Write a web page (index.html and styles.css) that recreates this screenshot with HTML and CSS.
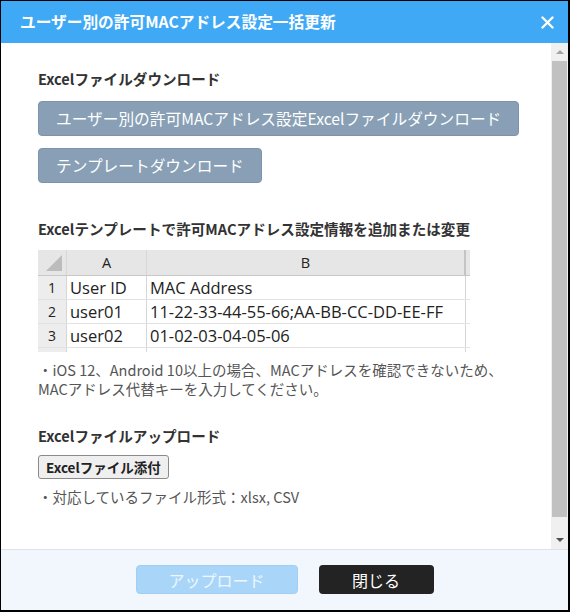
FILE: index.html
```html
<!DOCTYPE html>
<html lang="ja">
<head>
    <meta charset="UTF-8">
    <meta name="viewport" content="width=device-width, initial-scale=1.0">
    <title>ユーザー別の許可MACアドレス設定一括更新</title>
    <link rel="stylesheet" href="styles.css">
</head>
<body>
    <div class="dialog">
        <div class="dialog-header">
            <h1 class="dialog-title">ユーザー別の許可MACアドレス設定一括更新</h1>
            <button class="close-btn" aria-label="閉じる">
                <svg width="13" height="13" viewBox="0 0 13 13">
                    <path d="M1.5 1.5 L11.5 11.5 M11.5 1.5 L1.5 11.5" stroke="#fff" stroke-width="2.4" stroke-linecap="round"/>
                </svg>
            </button>
        </div>

        <div class="dialog-body">
            <div class="content">
                <h2 class="section-title">Excelファイルダウンロード</h2>
                <button class="btn btn-steel btn-wide">ユーザー別の許可MACアドレス設定Excelファイルダウンロード</button>
                <button class="btn btn-steel btn-template">テンプレートダウンロード</button>

                <h2 class="section-title section-gap">Excelテンプレートで許可MACアドレス設定情報を追加または変更</h2>
                <div class="sheet">
                    <div class="sheet-row sheet-head">
                        <div class="cell corner"><span class="corner-tri"></span></div>
                        <div class="cell col-a">A</div>
                        <div class="cell col-b">B</div>
                    </div>
                    <div class="sheet-row">
                        <div class="cell num">1</div>
                        <div class="cell col-a">User ID</div>
                        <div class="cell col-b">MAC Address</div>
                    </div>
                    <div class="sheet-row">
                        <div class="cell num">2</div>
                        <div class="cell col-a">user01</div>
                        <div class="cell col-b">11-22-33-44-55-66;AA-BB-CC-DD-EE-FF</div>
                    </div>
                    <div class="sheet-row">
                        <div class="cell num">3</div>
                        <div class="cell col-a">user02</div>
                        <div class="cell col-b">01-02-03-04-05-06</div>
                    </div>
                    <div class="sheet-row sheet-cut">
                        <div class="cell num"></div>
                        <div class="cell col-a"></div>
                        <div class="cell col-b"></div>
                    </div>
                </div>
                <p class="note">・iOS 12、Android 10以上の場合、MACアドレスを確認できないため、<br>MACアドレス代替キーを入力してください。</p>

                <h2 class="section-title upload-title">Excelファイルアップロード</h2>
                <button class="btn-attach">Excelファイル添付</button>
                <p class="note formats">・対応しているファイル形式：xlsx, CSV</p>
            </div>

            <div class="scrollbar">
                <div class="scroll-arrow"><span class="tri-up"></span></div>
                <div class="scroll-track"><div class="scroll-thumb"></div></div>
                <div class="scroll-arrow"><span class="tri-down"></span></div>
            </div>
        </div>

        <div class="dialog-footer">
            <button class="btn btn-upload" disabled>アップロード</button>
            <button class="btn btn-close">閉じる</button>
        </div>
    </div>
</body>
</html>
```

FILE: styles.css
```css
* {
    box-sizing: border-box;
    margin: 0;
    padding: 0;
}

body {
    font-family: "Noto Sans CJK JP", "Noto Sans", sans-serif;
    background-color: #ffffff;
    color: #333333;
}

.dialog {
    width: 570px;
    height: 612px;
    border-top: 1px solid #000;
    border-left: 1px solid #000;
    border-right: 2px solid #000;
    border-bottom: 2px solid #000;
    display: flex;
    flex-direction: column;
    background-color: #ffffff;
}

/* header */
.dialog-header {
    height: 42px;
    background-color: #3fa9f5;
    display: flex;
    align-items: center;
    justify-content: space-between;
    padding: 0 14px 0 19px;
    flex-shrink: 0;
}

.dialog-title {
    color: #ffffff;
    font-size: 15.7px;
    font-weight: bold;
    line-height: 1;
}

.close-btn {
    background: none;
    border: none;
    width: 13px;
    height: 13px;
    display: flex;
}

/* body */
.dialog-body {
    flex: 1;
    display: flex;
    min-height: 0;
}

.content {
    flex: 1;
    padding: 25px 0 0 37px;
}

.section-title {
    font-size: 14.6px;
    font-weight: bold;
    line-height: 22px;
    color: #333333;
}

.section-gap {
    margin-top: 35px;
}

.btn {
    font-family: inherit;
    border: none;
    border-radius: 4px;
    cursor: pointer;
    color: #ffffff;
}

.btn-steel {
    display: block;
    background-color: #889fb5;
    border: 1px solid #7c93a9;
    font-size: 15.7px;
    height: 35px;
    padding: 0 17px;
}

.btn-wide {
    margin-top: 11px;
}

.btn-template {
    margin-top: 12px;
}

/* excel sample */
.sheet {
    margin-top: 10px;
    width: 432px;
    font-family: "Open Sans", "Noto Sans CJK JP", sans-serif;
    color: #222222;
}

.sheet-row {
    display: flex;
    height: 24px;
    border-bottom: 1px solid #e2e2e2;
}

.sheet-head {
    height: 26px;
    background-color: #e6e6e6;
    border-bottom: 1px solid #c8c8c8;
}

.sheet-cut {
    height: 4px;
    border-bottom: none;
}

.cell {
    border-right: 1px solid #d6d6d6;
    font-size: 16.5px;
    line-height: 23px;
    padding-left: 3px;
    white-space: nowrap;
}

.sheet-head .cell {
    font-size: 14.5px;
    line-height: 26px;
    text-align: center;
    padding-left: 0;
}

.corner {
    width: 29px;
    position: relative;
}

.corner-tri {
    position: absolute;
    right: 4px;
    bottom: 4px;
    width: 0;
    height: 0;
    border-left: 16px solid transparent;
    border-bottom: 16px solid #bcbcbc;
}

.num {
    width: 29px;
    font-size: 14px;
    text-align: center;
    padding-left: 0;
    background-color: #ededed;
}

.col-a {
    width: 80px;
}

.col-b {
    width: 319px;
}

.sheet-head .col-b {
    border-right: 2px solid #c4c4c4;
}

.note {
    margin-top: 8px;
    font-size: 14.5px;
    line-height: 19px;
    color: #555555;
}

.upload-title {
    margin-top: 27px;
}

.btn-attach {
    display: block;
    margin-top: 8px;
    height: 24px;
    padding: 0 7px;
    font-family: inherit;
    font-size: 13.5px;
    font-weight: bold;
    color: #222222;
    background-color: #efefef;
    border: 1px solid #8a8a8a;
    border-radius: 3px;
}

.formats {
    margin-top: 8px;
}

/* scrollbar */
.scrollbar {
    width: 17px;
    background-color: #f0f0f0;
    display: flex;
    flex-direction: column;
    flex-shrink: 0;
}

.scroll-arrow {
    height: 18px;
    display: flex;
    align-items: center;
    justify-content: center;
}

.tri-up {
    border-left: 4px solid transparent;
    border-right: 4px solid transparent;
    border-bottom: 4px solid #a3a3a3;
}

.tri-down {
    border-left: 4px solid transparent;
    border-right: 4px solid transparent;
    border-top: 4px solid #505050;
}

.scroll-track {
    flex: 1;
    padding: 0 1px 14px 1px;
}

.scroll-thumb {
    height: 100%;
    background-color: #c1c1c1;
}

/* footer */
.dialog-footer {
    height: 61px;
    flex-shrink: 0;
    background-color: #f2f6fd;
    border-top: 1px solid #dde2ea;
    display: flex;
    justify-content: center;
    align-items: center;
    gap: 21px;
    padding-bottom: 1px;
}

.dialog-footer .btn {
    height: 29px;
    font-size: 16px;
}

.btn-upload {
    width: 162px;
    background-color: #a9d6f8;
    color: #eef7fe;
    border: 1px solid #9fcff4;
    cursor: default;
}

.btn-close {
    width: 115px;
    background-color: #232323;
}
```
